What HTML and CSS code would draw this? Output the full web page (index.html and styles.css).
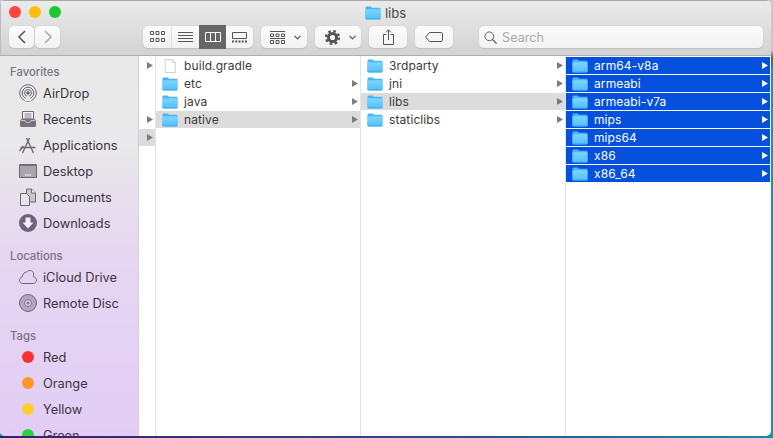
FILE: index.html
```html
<!DOCTYPE html>
<html lang="en">
<head>
    <meta charset="UTF-8">
    <meta name="viewport" content="width=device-width, initial-scale=1.0">
    <title>libs</title>
    <link rel="stylesheet" href="styles.css">
</head>
<body>

<svg class="sprite" width="0" height="0">
    <defs>
        <linearGradient id="folderFill" x1="0" y1="0" x2="0" y2="1">
            <stop offset="0" stop-color="#7ed5fd"/>
            <stop offset="1" stop-color="#52bffa"/>
        </linearGradient>
        <symbol id="folder" viewBox="0 0 16 14">
            <path d="M.5 2C.5 1.200 1 .6 1.800 .6h3.600c.7 0 1 .7 1.600 1.200h7.200c.8 0 1.300 .5 1.300 1.300v9c0 .8-.5 1.300-1.300 1.300H1.800c-.8 0-1.300-.5-1.300-1.300z" fill="#47b6f5"/>
            <path d="M.5 4.200c0-.5 .4-.9 .9-.9h13.200c.5 0 .9 .4 .9 .9v8.100c0 .6-.5 1-1.100 1H1.600c-.6 0-1.100-.4-1.100-1z" fill="url(#folderFill)"/>
            <path d="M.6 12.700h14.800" stroke="#3aa9ea" stroke-width=".7"/>
        </symbol>
        <symbol id="arrow" viewBox="0 0 6 7">
            <path d="M0 0l6 3.500-6 3.500z"/>
        </symbol>
    </defs>
</svg>

<div class="window">

    <div class="toolbar">
        <div class="titlebar">
            <div class="lights">
                <span class="light light-red"></span>
                <span class="light light-yellow"></span>
                <span class="light light-green"></span>
            </div>
            <div class="title">
                <svg class="title-folder"><use href="#folder"/></svg>
                <span>libs</span>
            </div>
        </div>

        <div class="tools">
            <div class="nav-group">
                <div class="btn btn-nav">
                    <svg width="10" height="14" viewBox="0 0 10 14"><path d="M8 1L2 7l6 6" fill="none" stroke="#555" stroke-width="1.500"/></svg>
                </div>
                <div class="btn btn-nav">
                    <svg width="10" height="14" viewBox="0 0 10 14"><path d="M2 1l6 6-6 6" fill="none" stroke="#a9a9a9" stroke-width="1.500"/></svg>
                </div>
            </div>

            <div class="btn views">
                <div class="view">
                    <svg width="15" height="12" viewBox="0 0 15 12" fill="none" stroke="#555">
                        <path d="M.5 .5h3v3h-3zM6 .5h3v3H6zM11.500 .5h3v3h-3zM.5 7.500h3v3h-3zM6 7.500h3v3H6zM11.500 7.500h3v3h-3z"/>
                    </svg>
                </div>
                <div class="view">
                    <svg width="15" height="10" viewBox="0 0 15 10" stroke="#555"><path d="M0 .5h15M0 3.500h15M0 6.500h15M0 9.500h15"/></svg>
                </div>
                <div class="view view-on">
                    <svg width="16" height="10" viewBox="0 0 16 10" fill="none" stroke="#fff"><path d="M.5 .5h15v9H.5zM5.500 .5v9M10.500 .5v9"/></svg>
                </div>
                <div class="view">
                    <svg width="15" height="11" viewBox="0 0 15 11" fill="none" stroke="#555">
                        <path d="M.5 .5h14v6H.5z"/>
                        <path d="M0 9.500h15" stroke-width="2" stroke-dasharray="2 1.250"/>
                    </svg>
                </div>
            </div>

            <div class="btn btn-menu">
                <svg width="15" height="13" viewBox="0 0 15 13" fill="none" stroke="#555">
                    <path d="M0 .5h15M.5 3h3v2.500h-3zM6 3h3v2.500H6zM11.500 3h3v2.500h-3zM0 7.500h15M.5 9.500h3v3h-3zM6 9.500h3v3H6zM11.500 9.500h3v3h-3z"/>
                </svg>
                <svg width="7" height="5" viewBox="0 0 7 5"><path d="M.5 .8l3 3 3-3" fill="none" stroke="#555" stroke-width="1.200"/></svg>
            </div>

            <div class="btn btn-menu btn-action">
                <svg width="15" height="15" viewBox="0 0 14 14" fill="none">
                    <circle cx="7" cy="7" r="3.800" stroke="#555" stroke-width="2.800"/>
                    <circle cx="7" cy="7" r="6" stroke="#555" stroke-width="2.200" stroke-dasharray="2.400 2.312"/>
                </svg>
                <svg width="7" height="5" viewBox="0 0 7 5"><path d="M.5 .8l3 3 3-3" fill="none" stroke="#555" stroke-width="1.200"/></svg>
            </div>

            <div class="btn btn-share">
                <svg width="11" height="16" viewBox="0 0 11 16" fill="none" stroke="#555">
                    <path d="M3.500 5.500H.5v10h10v-10h-3M5.500 11V1M3 3.300L5.500 .8 8 3.300"/>
                </svg>
            </div>

            <div class="btn btn-tag">
                <svg width="18" height="10" viewBox="0 0 18 10" fill="none" stroke="#555">
                    <path d="M4.500 .5h11.700c.7 0 1.300 .6 1.300 1.300v6.400c0 .7-.6 1.300-1.300 1.300H4.500L.6 5z"/>
                </svg>
            </div>

            <div class="btn search">
                <svg width="13" height="13" viewBox="0 0 14 14" fill="none" stroke="#555">
                    <circle cx="5.700" cy="5.700" r="4.700"/>
                    <path d="M9 9l4.500 4.500" stroke-width="1.300"/>
                </svg>
                <span>Search</span>
            </div>
        </div>
    </div>

    <div class="main">
        <div class="sidebar">
            <div class="side-head">Favorites</div>
            <div class="side-item">
                <svg class="side-icon" viewBox="0 0 18 18" fill="none">
                    <circle cx="9" cy="9" r="8.300"/><circle cx="9" cy="9" r="5.800"/><circle cx="9" cy="9" r="3.400"/>
                    <circle cx="9" cy="9" r="1.300" fill="#6d6873"/>
                    <path d="M5.500 17l3.500-7 3.500 7z" fill="#eaeaea" stroke="none"/>
                </svg>
                AirDrop
            </div>
            <div class="side-item">
                <svg class="side-icon" viewBox="0 0 18 18" fill="none">
                    <path d="M3.500 1.500h11v9h-11z" fill="#f2f2f2"/>
                    <path d="M5.500 4h7M5.500 6h7M5.500 8h7" stroke-width=".8"/>
                    <path d="M1 10.500l2-2h12l2 2V16l-1 1H2l-1-1z" fill="#77727c" stroke="none"/>
                    <path d="M1.500 10.500h4.500c0 1.500 1 2 3 2s3-.5 3-2h4.500" stroke="#eaeaea" stroke-width=".7"/>
                </svg>
                Recents
            </div>
            <div class="side-item">
                <svg class="side-icon" viewBox="0 0 18 18" fill="none" stroke-width="1.400">
                    <path d="M3.500 17L10.500 2M14.500 17L7.500 2M1.500 11.500h15"/>
                    <path d="M.5 15l4-5"/>
                </svg>
                Applications
            </div>
            <div class="side-item">
                <svg class="side-icon" viewBox="0 0 18 18">
                    <path d="M.5 2.500h17v13H.5z" fill="#a8a5ac"/>
                    <path d="M1 3h16v1H1z" fill="#77727c" stroke="none"/>
                    <path d="M6 13h6" stroke="#f1f1f1" stroke-width="1.500" stroke-dasharray="1.500 .8"/>
                </svg>
                Desktop
            </div>
            <div class="side-item">
                <svg class="side-icon" viewBox="0 0 18 18">
                    <path d="M1.500 5.500h6l3 3v9h-9z" fill="#e7e5e9"/>
                    <path d="M7.500 1h5l4 4v9h-6V8.500l-3-3z" fill="#c9c6cc"/>
                    <path d="M12.500 1v4h4" fill="#f1f1f1"/>
                </svg>
                Documents
            </div>
            <div class="side-item">
                <svg class="side-icon" viewBox="0 0 18 18">
                    <circle cx="9" cy="9" r="9" fill="#6f6080" stroke="none"/>
                    <path d="M6.500 3.500h5v5h3L9 14.500 3.500 8.500h3z" fill="#f3eef6" stroke="none"/>
                </svg>
                Downloads
            </div>

            <div class="side-head side-head-gap">Locations</div>
            <div class="side-item">
                <svg class="side-icon" viewBox="0 0 18 18" fill="none">
                    <path d="M3.800 15.500C1.900 15.500 .5 14 .5 12.300c0-1.600 1.100-2.900 2.700-3.200C3.700 6 5.400 4 7.700 4c1.100-1.300 2.500-1.500 3.300-1.500 2.100 0 3.500 1.500 3.700 3.500 .1 1.300-.1 2-.4 2.600 2 .5 3.200 1.900 3.200 3.500 0 1.800-1.300 3.400-3.300 3.400z"/>
                </svg>
                iCloud Drive
            </div>
            <div class="side-item">
                <svg class="side-icon" viewBox="0 0 18 18">
                    <circle cx="9" cy="9" r="8.500" fill="#b4a5c6"/>
                    <circle cx="9" cy="9" r="3.500" fill="#d8cce6" stroke-width=".8"/>
                    <circle cx="9" cy="9" r="1.500" fill="#8a7a9c" stroke="none"/>
                </svg>
                Remote Disc
            </div>

            <div class="side-head side-head-gap">Tags</div>
            <div class="side-item"><span class="dot dot-red"></span>Red</div>
            <div class="side-item"><span class="dot dot-orange"></span>Orange</div>
            <div class="side-item"><span class="dot dot-yellow"></span>Yellow</div>
            <div class="side-item"><span class="dot dot-green"></span>Green</div>
        </div>

        <div class="col col-stub">
            <div class="row"><svg class="arrow"><use href="#arrow"/></svg></div>
            <div class="row"></div>
            <div class="row"></div>
            <div class="row"><svg class="arrow"><use href="#arrow"/></svg></div>
            <div class="row row-gray"><svg class="arrow"><use href="#arrow"/></svg></div>
        </div>

        <div class="col col-wide">
            <div class="row">
                <svg class="row-icon" viewBox="0 0 16 16" fill="none">
                    <path d="M2.500 .5h8l3.500 3.500v11.500H2.500z" fill="#fff" stroke="#c9c9c9"/>
                    <path d="M10.500 .5V4H14" stroke="#c9c9c9"/>
                </svg>
                <span class="row-name">build.gradle</span>
            </div>
            <div class="row"><svg class="row-icon"><use href="#folder"/></svg><span class="row-name">etc</span><svg class="arrow"><use href="#arrow"/></svg></div>
            <div class="row"><svg class="row-icon"><use href="#folder"/></svg><span class="row-name">java</span><svg class="arrow"><use href="#arrow"/></svg></div>
            <div class="row row-gray"><svg class="row-icon"><use href="#folder"/></svg><span class="row-name">native</span><svg class="arrow"><use href="#arrow"/></svg></div>
        </div>

        <div class="col col-wide">
            <div class="row"><svg class="row-icon"><use href="#folder"/></svg><span class="row-name">3rdparty</span><svg class="arrow"><use href="#arrow"/></svg></div>
            <div class="row"><svg class="row-icon"><use href="#folder"/></svg><span class="row-name">jni</span><svg class="arrow"><use href="#arrow"/></svg></div>
            <div class="row row-gray"><svg class="row-icon"><use href="#folder"/></svg><span class="row-name">libs</span><svg class="arrow"><use href="#arrow"/></svg></div>
            <div class="row"><svg class="row-icon"><use href="#folder"/></svg><span class="row-name">staticlibs</span><svg class="arrow"><use href="#arrow"/></svg></div>
        </div>

        <div class="col col-last">
            <div class="row row-blue"><svg class="row-icon"><use href="#folder"/></svg><span class="row-name">arm64-v8a</span><svg class="arrow"><use href="#arrow"/></svg></div>
            <div class="row row-blue"><svg class="row-icon"><use href="#folder"/></svg><span class="row-name">armeabi</span><svg class="arrow"><use href="#arrow"/></svg></div>
            <div class="row row-blue"><svg class="row-icon"><use href="#folder"/></svg><span class="row-name">armeabi-v7a</span><svg class="arrow"><use href="#arrow"/></svg></div>
            <div class="row row-blue"><svg class="row-icon"><use href="#folder"/></svg><span class="row-name">mips</span><svg class="arrow"><use href="#arrow"/></svg></div>
            <div class="row row-blue"><svg class="row-icon"><use href="#folder"/></svg><span class="row-name">mips64</span><svg class="arrow"><use href="#arrow"/></svg></div>
            <div class="row row-blue"><svg class="row-icon"><use href="#folder"/></svg><span class="row-name">x86</span><svg class="arrow"><use href="#arrow"/></svg></div>
            <div class="row row-blue"><svg class="row-icon"><use href="#folder"/></svg><span class="row-name">x86_64</span><svg class="arrow"><use href="#arrow"/></svg></div>
        </div>
    </div>
</div>

</body>
</html>
```

FILE: styles.css
```css
html, body {
  margin: 0;
  height: 438px;
  overflow: hidden;
}

body {
  font-family: Inter, "Liberation Sans", sans-serif;
  font-size: 12px;
  letter-spacing: .1px;
  color: #3a3a3a;
  background:
    linear-gradient(to right, #35206e, #2a4f8c 60%, #0f8fa6) bottom / 100% 2px no-repeat,
    linear-gradient(to bottom, #c8c8c8 50px, #5a5a5a 58px, #0f97ab 70px);
}

.sprite {
  position: absolute;
}

.window {
  width: 771px;
  height: 436px;
  border-radius: 5px;
  overflow: hidden;
  background: #fff;
  display: flex;
  flex-direction: column;
}

/* toolbar */
.toolbar {
  height: 55px;
  flex: none;
  border-bottom: 1px solid #aeaeae;
  background: linear-gradient(to bottom, #ebebeb, #d3d3d3);
  box-shadow: inset 0 1px #a8a8a8, inset 1px 0 #bcbcbc;
}

.titlebar {
  height: 26px;
  display: grid;
  grid-template-columns: 1fr auto 1fr;
  align-items: center;
}

.lights {
  display: flex;
  gap: 8px;
  padding: 0 0 2px 9px;
}

.light {
  width: 12px;
  height: 12px;
  border-radius: 50%;
}

.light-red { background: #fc4441; }
.light-yellow { background: #fdbd0b; }
.light-green { background: #1ec731; }

.title {
  display: flex;
  align-items: center;
  gap: 4px;
  font-size: 13px;
  letter-spacing: 0;
  color: #4b4b4b;
  padding-bottom: 1px;
}

.title-folder {
  width: 16px;
  height: 14px;
}

.tools {
  display: flex;
  align-items: center;
  height: 22px;
  padding-left: 9px;
}

.btn {
  height: 22px;
  box-sizing: border-box;
  border-radius: 5px;
  background: linear-gradient(to bottom, #fbfbfb, #f2f2f2);
  box-shadow: 0 0 0 .5px #d0d0d0, 0 1px 1px rgba(0, 0, 0, .18);
  display: flex;
  align-items: center;
  justify-content: center;
}

.nav-group {
  display: flex;
  gap: 1px;
}

.btn-nav {
  width: 25px;
}

.views {
  width: 110px;
  margin-left: 83px;
  justify-content: flex-start;
}

.view {
  width: 28px;
  height: 22px;
  flex: none;
  display: flex;
  align-items: center;
  justify-content: center;
}

.view + .view {
  box-sizing: border-box;
  width: 27px;
}

.view:first-child {
  width: 29px;
  box-sizing: border-box;
  border-right: 1px solid #dcdcdc;
}

.view-on {
  background: #666;
  height: 24px;
}

.btn-menu {
  width: 46px;
  margin-left: 8px;
  gap: 9px;
  padding-left: 3px;
}

.btn-action {
  gap: 9px;
  padding-left: 4px;
}

.btn-share {
  width: 38px;
  margin-left: 8px;
}

.btn-tag {
  width: 38px;
  margin-left: 8px;
}

.search {
  width: 284px;
  margin-left: 26px;
  justify-content: flex-start;
  gap: 5px;
  padding-left: 5px;
  font-size: 12.7px;
  letter-spacing: 0;
  color: #aaa;
}

/* sidebar and columns */
.main {
  flex: 1;
  display: flex;
  min-height: 0;
}

.sidebar {
  width: 139px;
  flex: none;
  box-sizing: border-box;
  padding-top: 8px;
  border-right: 1px solid #d6d0da;
  overflow: hidden;
  color: #3b3440;
  background: linear-gradient(to bottom, #e9e9e9 0, #e9e8ea 90px, #e5d6f1 200px, #e3cdf6 380px);
}

.side-head {
  height: 16px;
  line-height: 16px;
  margin-left: 10px;
  font-size: 11.3px;
  font-weight: 500;
  letter-spacing: 0;
  color: #7b7482;
}

.side-head-gap {
  margin-top: 12px;
}

.side-item {
  height: 26px;
  flex: none;
  display: flex;
  align-items: center;
  font-size: 12.8px;
  letter-spacing: 0;
}

.side-icon {
  width: 18px;
  height: 18px;
  flex: none;
  margin: 0 6px 0 19px;
  stroke: #6d6873;
}

.dot {
  width: 12px;
  height: 12px;
  flex: none;
  border-radius: 50%;
  margin: 0 9px 0 22px;
}

.dot-red { background: #fc2f33; }
.dot-orange { background: #fd9628; }
.dot-yellow { background: #fdd02d; }
.dot-green { background: #2cd33f; }

.col {
  flex: none;
  box-sizing: border-box;
  border-right: 1px solid #e4e4e4;
}

.col-stub {
  width: 17px;
}

.col-wide {
  width: 205px;
}

.col-last {
  width: 205px;
  border-right: none;
}

.row {
  height: 17px;
  margin-top: 1px;
  display: flex;
  align-items: center;
  padding: 0 2px 0 6px;
}

.row-icon {
  width: 16px;
  height: 14px;
  flex: none;
}

.row-name {
  flex: 1;
  margin-left: 6px;
  white-space: nowrap;
}

.arrow {
  width: 6px;
  height: 7px;
  flex: none;
  fill: #7c7c7c;
}

.col-stub .row {
  padding: 0 0 0 8px;
}

.row-gray {
  background: #dcdcdc;
}

.row-blue {
  background: #0551de;
  color: #fff;
  margin-right: 1px;
}

.row-blue .arrow {
  fill: #fff;
}
```
